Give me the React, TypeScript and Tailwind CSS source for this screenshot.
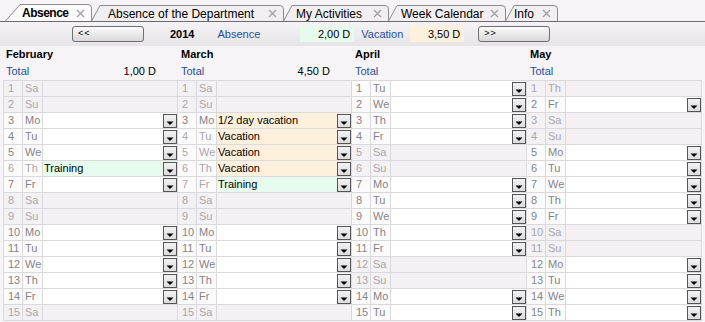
import React from 'react';

const WD = ['Su', 'Mo', 'Tu', 'We', 'Th', 'Fr', 'Sa'];

const months = [
  { name: 'February', m: 1, total: '1,00 D' },
  { name: 'March', m: 2, total: '4,50 D' },
  { name: 'April', m: 3, total: '' },
  { name: 'May', m: 4, total: '' },
];

// entries keyed by month-day
const entries: Record<string, { label: string; kind: 'vac' | 'train'; half?: boolean }> = {
  '1-6': { label: 'Training', kind: 'train' },
  '2-3': { label: '1/2 day vacation', kind: 'vac', half: true },
  '2-4': { label: 'Vacation', kind: 'vac' },
  '2-5': { label: 'Vacation', kind: 'vac' },
  '2-6': { label: 'Vacation', kind: 'vac' },
  '2-7': { label: 'Training', kind: 'train' },
};

const holidays = ['4-1'];

const tabs = [
  { label: 'Absence', w: 87, pl: 17, active: true },
  { label: 'Absence of the Department', w: 193, pl: 17 },
  { label: 'My Activities', w: 106, pl: 13 },
  { label: 'Week Calendar', w: 118, pl: 13 },
  { label: 'Info', w: 53, pl: 9 },
];

function CloseX() {
  return (
    <svg width="9" height="9" viewBox="0 0 9 9" className="flex-none">
      <path d="M1 1 L8 8 M8 1 L1 8" stroke="#a3a1a5" strokeWidth="1.4" />
    </svg>
  );
}

function Tab({ t }: { t: (typeof tabs)[number] }) {
  const H = t.active ? 17 : 16;
  const S = t.active ? 15 : 9;
  const W = t.w;
  return (
    <div
      className={`relative flex-none flex items-center ${t.active ? 'z-10' : '-ml-[1px]'}`}
      style={{ width: W, height: H }}
    >
      <svg className="absolute inset-0" width={W} height={H}>
        <path
          d={`M0.5 ${H} L${S} 0.5 L${W - 4} 0.5 Q${W - 0.5} 0.5 ${W - 0.5} 4 L${W - 0.5} ${H}`}
          fill={t.active ? '#fdfcfd' : '#f1eff1'}
          stroke="#8e8a90"
        />
      </svg>
      <div className="relative flex items-center w-full pr-[7px] pt-[1px]" style={{ paddingLeft: t.pl }}>
        <span
          className={`flex-1 text-[12px] text-black whitespace-nowrap ${t.active ? 'font-bold tracking-[-0.5px]' : ''}`}
        >
          {t.label}
        </span>
        <CloseX />
      </div>
    </div>
  );
}

function NavButton({ label }: { label: string }) {
  return (
    <div className="w-[72px] h-[16px] flex-none border border-[#6f6d71] rounded-[3px] bg-gradient-to-b from-[#fbfbfb] to-[#d9d8da] text-[9px] leading-[13px] pl-[5px] tracking-[1px] text-black">
      {label}
    </div>
  );
}

function Dropdown() {
  return (
    <div className="flex-none w-[14px] h-[14px] mt-[1px] border border-[#555357] bg-gradient-to-b from-[#f2f2f2] to-[#dcdcdc] flex">
      <svg width="12" height="12" viewBox="0 0 12 12">
        <path d="M2.5 6.5 L9.5 6.5 L6 10 Z" fill="#000" />
      </svg>
    </div>
  );
}

function MonthColumn({ m, first }: { m: number; first: boolean }) {
  const rows = [];
  for (let d = 1; d <= 15; d++) {
    const wd = new Date(2014, m, d).getDay();
    const key = `${m}-${d}`;
    const off = wd === 0 || wd === 6 || holidays.includes(key);
    const e = entries[key];
    const light = off || (e && !e.half);
    const txt = light ? 'text-[#aaa6ad]' : 'text-[#858388]';
    const contentBg = off ? 'bg-[#f4f0f4]' : e ? (e.kind === 'vac' ? 'bg-[#fdf1de]' : 'bg-[#e7fbef]') : 'bg-white';
    const sideBg = off ? 'bg-[#f4f1f4]' : 'bg-[#fcfbfc]';
    rows.push(
      <div key={d} className="flex h-[16px] border-b border-[#dcd9dd]">
        <div className={`w-[19px] flex-none border-r border-[#dcd9dd] pl-[4px] leading-[15px] ${sideBg} ${txt}`}>{d}</div>
        <div className={`w-[20px] flex-none border-r border-[#dcd9dd] pl-[2px] leading-[15px] ${sideBg} ${txt}`}>{WD[wd]}</div>
        <div className={`flex-1 min-w-0 flex border-r border-[#dcd9dd] ${contentBg}`}>
          <span className="flex-1 pl-[1px] leading-[15px] text-black whitespace-nowrap overflow-hidden">{e ? e.label : ''}</span>
          {!off && <Dropdown />}
        </div>
      </div>
    );
  }
  return <div className={`flex flex-col ${first ? 'border-l border-[#dcd9dd]' : ''}`}>{rows}</div>;
}

export default function App() {
  return (
    <div
      className="w-[705px] h-[322px] overflow-hidden bg-[#f6f4f6] text-[11px]"
      style={{ fontFamily: '"Liberation Sans", Arial, sans-serif' }}
    >
      {/* tab strip */}
      <div className="h-[22px] flex items-end pl-[5px] border-b border-[#6e6a70] bg-[#f7f4f7]">
        {tabs.map((t) => (
          <Tab key={t.label} t={t} />
        ))}
      </div>

      {/* toolbar */}
      <div className="h-[24px] flex items-center pl-[72px] bg-gradient-to-b from-[#f5f3f5] to-[#e6e4e6]">
        <NavButton label="<<" />
        <span className="ml-[26px] font-bold text-black">2014</span>
        <span className="ml-[23px] text-[#1f4f9e]">Absence</span>
        <div className="ml-[40px] w-[54px] h-[16px] bg-[#e6fbee] text-right pr-[4px] leading-[16px] text-black">2,00 D</div>
        <span className="ml-[7px] text-[#1f4f9e]">Vacation</span>
        <div className="ml-[7px] w-[54px] h-[16px] bg-[#fdf1de] text-right pr-[4px] leading-[16px] text-black">3,50 D</div>
        <div className="ml-[14px]">
          <NavButton label=">>" />
        </div>
      </div>

      {/* months */}
      <div className="grid grid-cols-[175px_174px_175px_175px] pl-[3px]">
        {months.map((mo) => (
          <div key={mo.name} className="h-[34px]">
            <div className="h-[17px] leading-[17px] pl-[3px] font-bold text-black">{mo.name}</div>
            <div className="h-[17px] leading-[17px] pl-[3px] pr-[22px] flex">
              <span className="flex-1 text-[#1f4f9e]">Total</span>
              <span className="text-black">{mo.total}</span>
            </div>
          </div>
        ))}
        {months.map((mo, i) => (
          <div key={mo.name + 'g'} className="border-t border-[#dcd9dd]">
            <MonthColumn m={mo.m} first={i === 0} />
          </div>
        ))}
      </div>
    </div>
  );
}
